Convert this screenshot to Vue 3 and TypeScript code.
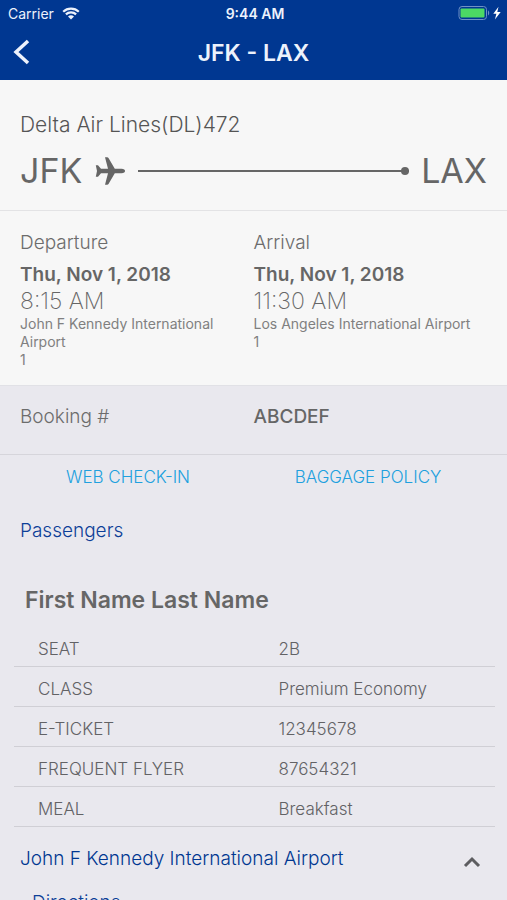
<script setup lang="ts">
import { ref } from 'vue'

interface Stop {
  label: string
  date: string
  time: string
  airport: string
  terminal: string
}

interface Detail {
  label: string
  value: string
}

const stops: Stop[] = [
  { label: 'Departure', date: 'Thu, Nov 1, 2018', time: '8:15 AM', airport: 'John F Kennedy International Airport', terminal: '1' },
  { label: 'Arrival', date: 'Thu, Nov 1, 2018', time: '11:30 AM', airport: 'Los Angeles International Airport', terminal: '1' },
]

const details: Detail[] = [
  { label: 'SEAT', value: '2B' },
  { label: 'CLASS', value: 'Premium Economy' },
  { label: 'E-TICKET', value: '12345678' },
  { label: 'FREQUENT FLYER', value: '87654321' },
  { label: 'MEAL', value: 'Breakfast' },
]

const airportOpen = ref(true)
</script>

<template>
  <div class="screen">
    <header class="top">
      <div class="status">
        <span class="carrier">
          Carrier
          <svg class="wifi" viewBox="0 0 18 13" aria-hidden="true">
            <path d="M1.2 4.7a11.2 11.2 0 0 1 15.6 0M3.9 7.4a7.3 7.3 0 0 1 10.2 0" />
            <path class="dot" d="M9 12.6 6 9.6a4.3 4.3 0 0 1 6 0z" />
          </svg>
        </span>
        <span class="clock">9:44 AM</span>
        <span class="power">
          <svg viewBox="0 0 44 16" aria-hidden="true">
            <rect class="case" x="1" y="1.5" width="27.5" height="13" rx="3" />
            <path class="tip" d="M30 5.6c1.6.5 1.6 4.3 0 4.8z" />
            <rect class="level" x="2.5" y="3.5" width="24" height="9" rx="1" />
            <path class="bolt" d="M40.5 1.8 35.3 8.8h3.1l-1.5 5.7 5.8-7.5h-3.4z" />
          </svg>
        </span>
      </div>
      <nav class="bar">
        <button class="back" type="button" aria-label="Back">
          <svg viewBox="0 0 18 26" aria-hidden="true"><path d="M16 2 4 13 16 24" /></svg>
        </button>
        <h1>JFK - LAX</h1>
      </nav>
    </header>

    <main class="content">
      <section class="flight">
        <h2>Delta Air Lines(DL)472</h2>
        <div class="route">
          <span>JFK</span>
          <svg class="plane" viewBox="0 0 30 28" aria-hidden="true">
            <path d="M10 .3h2.200q.8 0 1.300.8L19.800 11.700h6.700q3.500.2 3.500 2.300t-3.500 2.300h-6.700L13.500 26.900q-.5.8-1.300.8H10L13 16.300H6L3 19.800H.8L2 14 .8 8.200H3l3 3.500h7z" />
          </svg>
          <span class="track"></span>
          <span>LAX</span>
        </div>
      </section>

      <section class="stops">
        <div v-for="stop in stops" :key="stop.label" class="stop">
          <h3>{{ stop.label }}</h3>
          <p class="date">{{ stop.date }}</p>
          <p class="time">{{ stop.time }}</p>
          <p class="place">{{ stop.airport }}</p>
          <p class="place">{{ stop.terminal }}</p>
        </div>
      </section>

      <dl class="booking">
        <dt>Booking #</dt>
        <dd>ABCDEF</dd>
      </dl>

      <div class="links">
        <a href="#check-in">WEB CHECK-IN</a>
        <a href="#baggage">BAGGAGE POLICY</a>
      </div>

      <section class="passengers">
        <h2>Passengers</h2>
        <h3>First Name Last Name</h3>
        <table>
          <tbody>
            <tr v-for="row in details" :key="row.label">
              <th scope="row">{{ row.label }}</th>
              <td>{{ row.value }}</td>
            </tr>
          </tbody>
        </table>
      </section>

      <section class="airport">
        <button class="toggle" type="button" :aria-expanded="airportOpen" @click="airportOpen = !airportOpen">
          <span>John F Kennedy International Airport</span>
          <svg :class="{ closed: !airportOpen }" viewBox="0 0 18 12" aria-hidden="true"><path d="M2 10 9 3l7 7" /></svg>
        </button>
        <a v-if="airportOpen" class="directions" href="#directions">Directions</a>
      </section>
    </main>
  </div>
</template>

<style>
body {
  margin: 0;
  background: #e9e8ee;
}
</style>

<style scoped>
.screen {
  display: flex;
  flex-direction: column;
  height: 100vh;
  overflow: hidden;
  background: #e9e8ee;
  color: #666;
  font-family: Inter, "Liberation Sans", sans-serif;
}

h1,
h2,
h3,
p,
dl,
dd {
  margin: 0;
}

button {
  border: 0;
  padding: 0;
  background: none;
  font: inherit;
  cursor: pointer;
}

a {
  text-decoration: none;
}

svg {
  display: block;
  fill: none;
}

.top {
  flex: none;
  background: #003791;
  color: #edf2fc;
}

.status {
  display: grid;
  grid-template-columns: 1fr auto 1fr;
  align-items: center;
  height: 26px;
  padding: 0 5px 0 8px;
  font-size: 14px;
}

.carrier {
  display: flex;
  align-items: center;
  gap: 8px;
}

.wifi {
  width: 18px;
  height: 13px;
  stroke: #edf2fc;
  stroke-width: 2.2;
}

.wifi .dot {
  fill: #edf2fc;
  stroke: none;
}

.clock {
  font-weight: 600;
}

.power {
  justify-self: end;
}

.power svg {
  width: 44px;
  height: 16px;
}

.case {
  stroke: #6f91c5;
}

.tip {
  fill: #6f91c5;
}

.level {
  fill: #4cd964;
}

.bolt {
  fill: #fff;
}

.bar {
  display: grid;
  grid-template-columns: 48px 1fr 48px;
  align-items: center;
  height: 54px;
}

.back {
  padding: 0 0 2px 12px;
}

.back svg {
  width: 18px;
  height: 26px;
  stroke: #edf2fc;
  stroke-width: 3.5;
}

h1 {
  font-size: 23px;
  font-weight: 600;
  line-height: 50px;
  text-align: center;
}

.content {
  flex: 1;
  min-height: 0;
  overflow-y: auto;
  scrollbar-width: none;
}

.flight {
  padding: 31px 20px 13px;
  border-bottom: 1px solid #e3e3e5;
  background: #f7f7f7;
}

.flight h2 {
  color: #555;
  font-size: 21px;
  font-weight: 300;
  line-height: 28px;
}

.route {
  display: flex;
  align-items: center;
  padding-top: 6px;
  font-size: 34px;
  font-weight: 400;
  line-height: 52px;
}

.plane {
  flex: none;
  width: 30px;
  height: 28px;
  margin: 0 13px;
  fill: #666;
}

.track {
  position: relative;
  flex: 1;
  height: 2px;
  margin-right: 12px;
  background: #666;
}

.track::after {
  content: "";
  position: absolute;
  top: -3px;
  right: 0;
  width: 8px;
  height: 8px;
  border-radius: 50%;
  background: #666;
}

.stops {
  display: grid;
  grid-template-columns: 1fr 1fr;
  padding: 19px 20px 16px;
  border-bottom: 1px solid #e1e1e6;
  background: #f7f7f7;
}

.stop h3 {
  color: #6c6c6c;
  font-size: 19px;
  font-weight: 300;
  line-height: 26px;
}

.date {
  padding-top: 6px;
  font-size: 19px;
  font-weight: 600;
  line-height: 26px;
}

.time {
  font-size: 23px;
  font-weight: 200;
  line-height: 27px;
}

.place {
  color: #808080;
  font-size: 14px;
  font-weight: 400;
  line-height: 18px;
}

.booking {
  display: grid;
  grid-template-columns: 1fr 1fr;
  padding: 17px 20px 24px;
  border-bottom: 1px solid #d6d5db;
  font-size: 19px;
  line-height: 27px;
}

dt {
  color: #6c6c6c;
  font-weight: 300;
}

dd {
  font-weight: 500;
}

.links {
  display: grid;
  grid-template-columns: 1fr 1fr;
  padding: 8px 19px 8px 8px;
}

.links a {
  color: #20a0de;
  font-size: 17px;
  font-weight: 300;
  line-height: 28px;
  text-align: center;
}

.passengers {
  padding: 18px 12px 0 14px;
}

.passengers h2 {
  padding-left: 6px;
  color: #0d3f98;
  font-size: 19px;
  font-weight: 300;
  line-height: 28px;
}

.passengers h3 {
  padding: 37px 0 9px 11px;
  font-size: 23px;
  font-weight: 600;
  line-height: 36px;
}

table {
  width: 100%;
  border-collapse: collapse;
  table-layout: fixed;
}

th,
td {
  height: 34px;
  padding: 5px 0 0 24px;
  border-bottom: 1px solid #d0cfd5;
  color: #626265;
  font-size: 17px;
  font-weight: 300;
  line-height: 24px;
  text-align: left;
}

.airport {
  padding: 2px 26px 20px 20px;
}

.toggle {
  display: flex;
  align-items: center;
  justify-content: space-between;
  width: 100%;
  padding: 16px 0;
  color: #003791;
  font-size: 19px;
  font-weight: 300;
  line-height: 28px;
  text-align: left;
}

.toggle svg {
  width: 18px;
  height: 12px;
  margin-top: 6px;
  stroke: #5d5d60;
  stroke-width: 3;
}

.toggle svg.closed {
  transform: rotate(180deg);
}

.directions {
  display: block;
  padding-left: 12px;
  color: #0d3f98;
  font-size: 19px;
  font-weight: 300;
  line-height: 28px;
}
</style>
